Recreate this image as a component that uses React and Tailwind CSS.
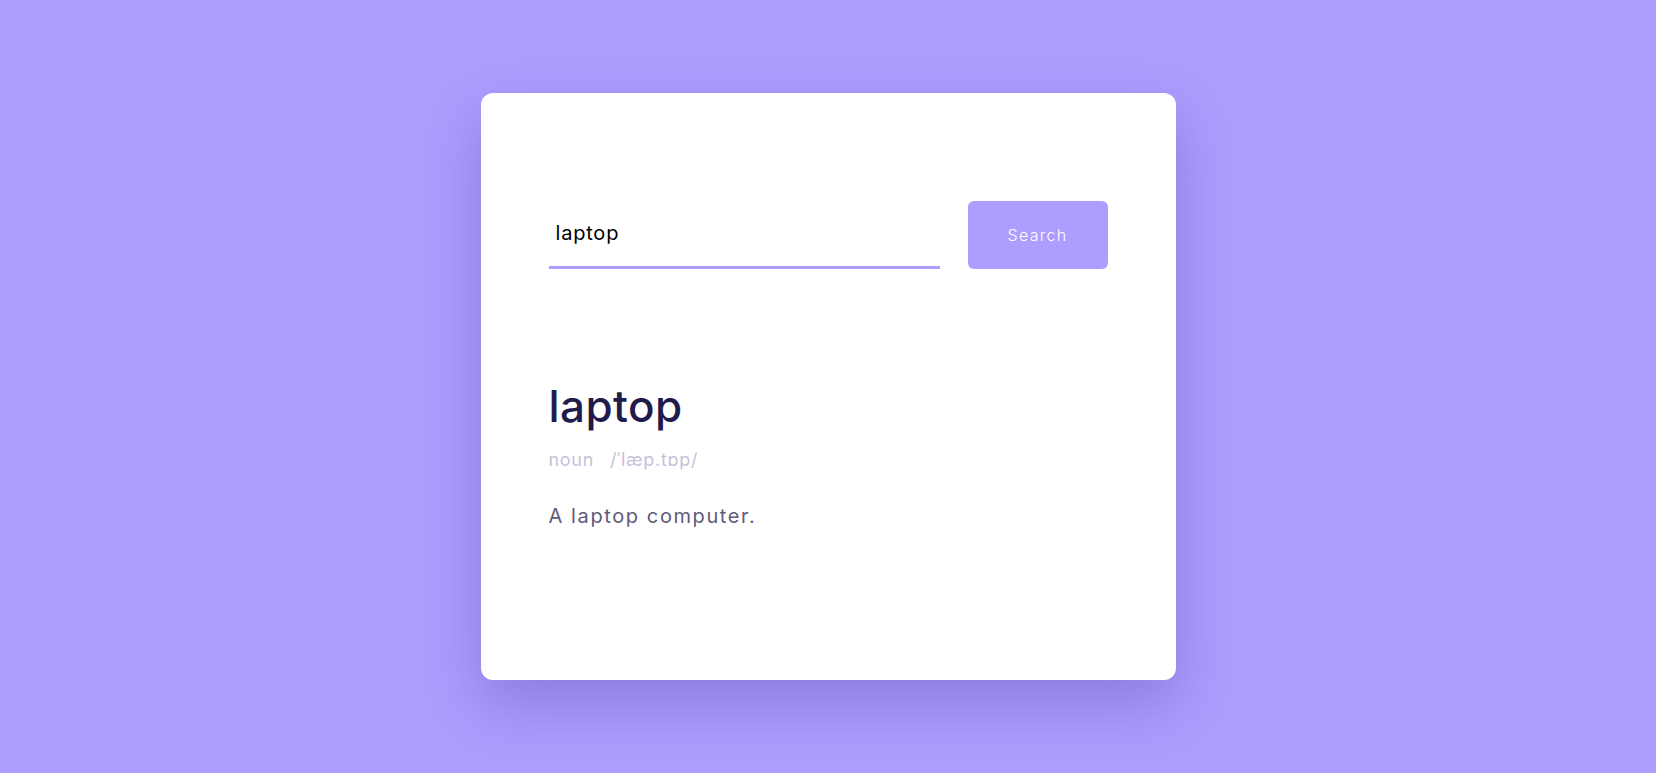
import React, { useState } from "react";

const App = () => {
  const [word, setWord] = useState("laptop");

  return (
    <div
      className="min-h-screen w-full bg-[#ad9dfe] flex items-center justify-center"
      style={{ fontFamily: "Inter, 'Noto Sans', sans-serif" }}
    >
      <div className="w-[695px] h-[587px] bg-white rounded-xl shadow-[0_24px_60px_rgba(80,60,170,0.35)] px-[68px] pt-[108px]">
        {/* Search row */}
        <div className="flex items-start gap-[28px]">
          <div className="flex-1 h-[68px] flex flex-col justify-end">
            <input
              type="text"
              value={word}
              onChange={(e) => setWord(e.target.value)}
              className="w-full h-[54px] pl-[7px] pb-[16px] text-[20px] tracking-[0.04em] text-black outline-none border-b-[3px] border-[#ad9dfe]"
            />
          </div>
          <button className="w-[140px] h-[68px] rounded-md bg-[#ad9dfe] text-white text-[16px] font-light tracking-[0.08em]">
            Search
          </button>
        </div>

        {/* Result */}
        <div className="mt-[115px]">
          <h1 className="text-[44px] leading-none font-medium text-[#1f1b4b] tracking-[0.01em]">
            laptop
          </h1>
          <p className="mt-[18px] text-[18px] text-[#c5c2d9] tracking-[0.04em]">
            noun <span className="ml-[10px]">/ˈlæp.tɒp/</span>
          </p>
          <p className="mt-[28px] text-[20px] text-[#5d5b79] tracking-[0.08em]">A laptop computer.</p>
        </div>
      </div>
    </div>
  );
};

export default App;
